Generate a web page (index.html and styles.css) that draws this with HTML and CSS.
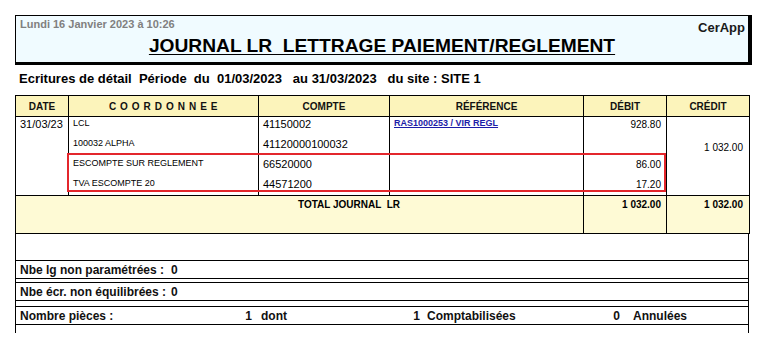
FILE: index.html
```html
<!DOCTYPE html>
<html lang="fr">
<head>
<meta charset="utf-8">
<title>Journal LR</title>
<link rel="stylesheet" href="styles.css">
</head>
<body>
<div class="page">
  <div class="head-box">
    <div class="head-top">
      <span class="stamp">Lundi 16 Janvier 2023 à 10:26</span>
      <span class="app">CerApp</span>
    </div>
    <h1 class="title">JOURNAL LR&nbsp; LETTRAGE PAIEMENT/REGLEMENT</h1>
  </div>
  <p class="subtitle">Ecritures de détail  Période  du  01/03/2023   au 31/03/2023   du site : SITE 1</p>

  <div class="table-wrap">
    <table class="journal">
      <colgroup>
        <col class="c-date"><col class="c-coord"><col class="c-compte"><col class="c-ref"><col class="c-debit"><col class="c-credit">
      </colgroup>
      <thead>
        <tr class="hrow">
          <th>DATE</th>
          <th class="spaced">C O O R D O N N E E</th>
          <th>COMPTE</th>
          <th>RÉFÉRENCE</th>
          <th>DÉBIT</th>
          <th>CRÉDIT</th>
        </tr>
      </thead>
      <tbody>
        <tr class="drow">
          <td class="date" rowspan="4">31/03/23</td>
          <td class="coord">LCL</td>
          <td class="acct">41150002</td>
          <td class="ref"><a href="#">RAS1000253 / VIR REGL</a></td>
          <td class="amt">928.80</td>
          <td class="amt cr"></td>
        </tr>
        <tr class="drow">
          <td class="coord">100032 ALPHA</td>
          <td class="acct">41120000100032</td>
          <td class="ref"></td>
          <td class="amt"></td>
          <td class="amt cr low">1 032.00</td>
        </tr>
        <tr class="drow">
          <td class="coord">ESCOMPTE SUR REGLEMENT</td>
          <td class="acct">66520000</td>
          <td class="ref"></td>
          <td class="amt">86.00</td>
          <td class="amt cr"></td>
        </tr>
        <tr class="drow last">
          <td class="coord">TVA ESCOMPTE 20</td>
          <td class="acct">44571200</td>
          <td class="ref"></td>
          <td class="amt">17.20</td>
          <td class="amt cr"></td>
        </tr>
        <tr class="trow">
          <td class="tlabel" colspan="4">TOTAL JOURNAL  LR</td>
          <td class="tamt">1 032.00</td>
          <td class="tamt cr">1 032.00</td>
        </tr>
      </tbody>
    </table>
    <div class="highlight"></div>
  </div>

  <div class="foot">
    <div class="stat stat-a">
      <span class="s-lbl">Nbe lg non paramétrées :</span><span>0</span>
    </div>
    <div class="stat stat-b">
      <span class="s-lbl">Nbe écr. non équilibrées :</span><span>0</span>
    </div>
    <div class="stat stat-c">
      <span>Nombre pièces :</span>
      <span class="n">1</span>
      <span class="w1">dont</span>
      <span class="n">1</span>
      <span class="w2">Comptabilisées</span>
      <span class="n">0</span>
      <span class="w3">Annulées</span>
    </div>
  </div>
</div>
</body>
</html>
```

FILE: styles.css
```css
* { box-sizing: border-box; }

body {
  margin: 0;
  background: #ffffff;
  font-family: "Liberation Sans", Arial, sans-serif;
  color: #000;
}

.page {
  padding: 15px 0 0 15px;
  width: 763px;
}

/* ---------- header box ---------- */
.head-box {
  width: 737px;
  height: 50px;
  background: #f0fbff;
  border-style: solid;
  border-color: #000;
  border-width: 1px 4px 3px 1px;
}

.head-top {
  display: flex;
  justify-content: space-between;
  align-items: flex-start;
}

.stamp {
  font-size: 11px;
  font-weight: bold;
  line-height: 13px;
  color: #808080;
  padding: 2px 0 0 4px;
}

.app {
  font-size: 13px;
  font-weight: bold;
  line-height: 15px;
  color: #1a1a1a;
  padding: 4px 3px 0 0;
}

.title {
  margin: 0;
  font-size: 19.2px;
  line-height: 22px;
  font-weight: bold;
  text-align: center;
  text-decoration: underline;
  text-underline-offset: 2px;
  color: #000;
}

.subtitle {
  margin: 6px 0 0 4px;
  font-size: 13px;
  line-height: 16px;
  font-weight: bold;
  white-space: pre;
}

/* ---------- table ---------- */
.table-wrap {
  position: relative;
  margin-top: 8px;
  width: 734px;
}

.journal {
  width: 734px;
  border-collapse: collapse;
  table-layout: fixed;
}

.c-date { width: 53px; }
.c-coord { width: 190px; }
.c-compte { width: 131px; }
.c-ref { width: 194px; }
.c-debit { width: 83px; }
.c-credit { width: 83px; }

.hrow th {
  height: 21px;
  padding: 0;
  background: #fcf4bb;
  border: 1px solid #000;
  font-size: 10px;
  font-weight: bold;
  text-align: center;
  vertical-align: middle;
  color: #111;
}

.hrow .spaced { letter-spacing: 0.6px; }

.drow td {
  height: 20px;
  padding: 1px 4px 0;
  border-left: 1px solid #000;
  border-right: 1px solid #000;
  border-top: none;
  border-bottom: none;
  vertical-align: top;
  line-height: 13px;
  white-space: nowrap;
}

.drow.last td { height: 19px; border-bottom: 1px solid #000; }

.drow td.date {
  font-size: 11px;
  border-bottom: 1px solid #000;
}

.drow td.coord {
  font-size: 9px;
  padding-top: 0;
}

.drow td.acct { font-size: 11px; }

.drow td.ref {
  font-size: 9px;
  font-weight: bold;
  padding-top: 0;
}

.ref a { color: #1c1ca8; text-decoration: underline; }

.drow td.amt {
  font-size: 10px;
  text-align: right;
  padding-right: 5px;
}

.drow td.cr { padding-right: 6px; }
.drow td.low { padding-top: 4px; }

.trow td {
  height: 38px;
  background: #fefad5;
  border: 1px solid #000;
  vertical-align: top;
  font-size: 10px;
  font-weight: bold;
  line-height: 13px;
  padding-top: 2px;
}

.trow .tlabel {
  padding-left: 282px;
  white-space: pre;
}

.trow .tamt { text-align: right; padding-right: 5px; }
.trow .tamt.cr { padding-right: 6px; }

.highlight {
  position: absolute;
  left: 52px;
  top: 58px;
  width: 599px;
  height: 39px;
  border: 2px solid #e3262c;
  pointer-events: none;
}

/* ---------- footer ---------- */
.foot {
  width: 734px;
  border-left: 1px solid #000;
  border-right: 1px solid #000;
  padding: 26px 0 8px;
}

.stat {
  height: 19px;
  border-top: 1px solid #000;
  border-bottom: 1px solid #000;
  display: flex;
  align-items: center;
  padding-left: 4px;
  font-size: 12px;
  font-weight: bold;
  color: #111;
  white-space: pre;
}

.stat-b { margin-top: 3px; }
.stat-c { margin-top: 5px; }

.s-lbl { width: 151px; }

.stat-c > span:first-child { width: 222px; }
.stat-c .n { width: 10px; text-align: right; }
.stat-c .w1 { width: 158px; padding-left: 9px; }
.stat-c .w2 { width: 190px; padding-left: 7px; }
.stat-c .w3 { padding-left: 13px; }
```
